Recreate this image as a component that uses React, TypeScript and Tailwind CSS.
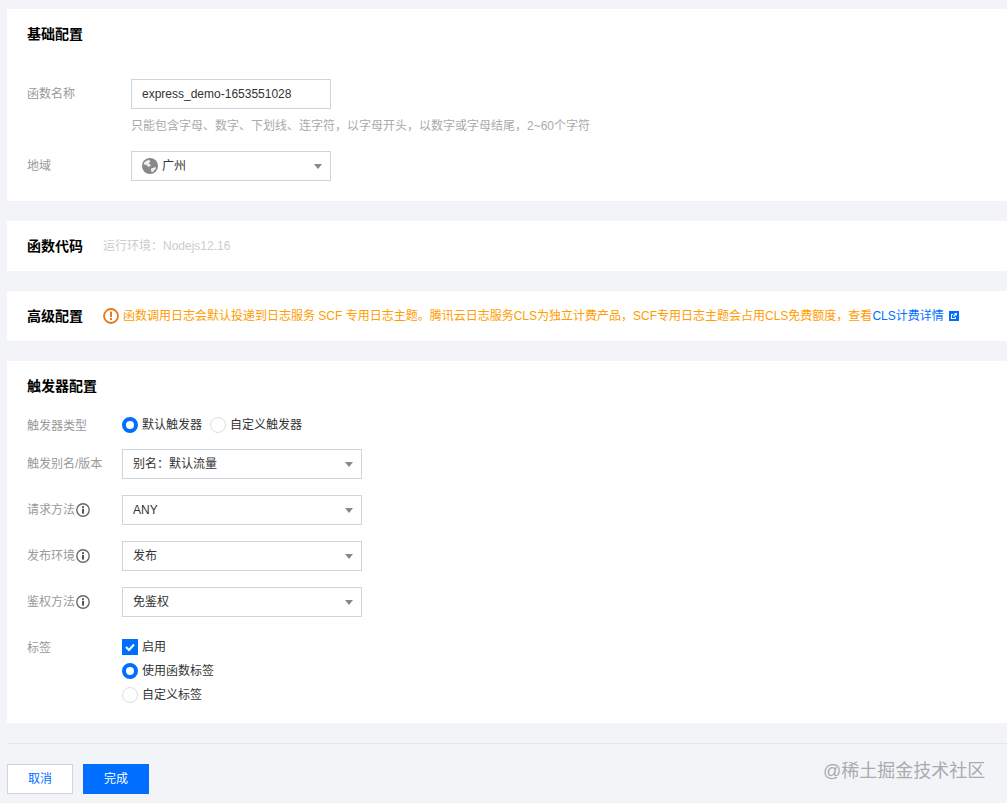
import { ReactNode } from "react";

const font = `[font-family:"Liberation_Sans","Noto_Sans_CJK_SC",sans-serif]`;

function Caret() {
  return <span className="w-0 h-0 border-x-[4px] border-x-transparent border-t-[5px] border-t-[#888]" />;
}

function Select({ children, width }: { children: ReactNode; width: string }) {
  return (
    <div className={`${width} h-[30px] border border-[#cfd5de] bg-white flex items-center justify-between pl-[10px] pr-[8px] text-[12px] text-[#333]`}>
      <div className="flex items-center">{children}</div>
      <Caret />
    </div>
  );
}

function Radio({ checked, label }: { checked?: boolean; label: string }) {
  return (
    <div className="flex items-center gap-[4px]">
      {checked ? (
        <span className="w-4 h-4 rounded-full border-[4px] border-[#006eff] bg-white" />
      ) : (
        <span className="w-4 h-4 rounded-full border border-[#ddd] bg-white" />
      )}
      <span className="text-[12px] leading-4 text-[#333]">{label}</span>
    </div>
  );
}

function InfoIcon() {
  return (
    <svg width="14" height="14" viewBox="0 0 14 14" className="ml-[1px]">
      <circle cx="7" cy="7" r="6.2" fill="none" stroke="#666" strokeWidth="1.4" />
      <rect x="6" y="5.8" width="2" height="4.8" fill="#555" />
      <rect x="6" y="3.2" width="2" height="1.7" fill="#555" />
    </svg>
  );
}

function Row({ label, info, children }: { label: string; info?: boolean; children: ReactNode }) {
  return (
    <div className="flex items-center h-[30px]">
      <div className="w-[95px] flex items-center text-[12px] text-[#999]">
        {label}
        {info && <InfoIcon />}
      </div>
      {children}
    </div>
  );
}

export default function App() {
  return (
    <div className={`${font} w-[1007px] h-[803px] overflow-hidden bg-[#f3f4f7] pt-[9px] pl-[7px]`}>
      {/* 基础配置 */}
      <div className="h-[192px] bg-white pl-5 pt-[16px]">
        <h2 className="text-[14px] leading-[18px] font-bold text-black">基础配置</h2>
        <div className="flex items-center mt-[36px]">
          <div className="w-[104px] text-[12px] text-[#999]">函数名称</div>
          <div className="w-[200px] h-[30px] border border-[#cfd5de] flex items-center pl-[10px] text-[12px] text-[#333]">
            express_demo-1653551028
          </div>
        </div>
        <p className="ml-[104px] mt-[9px] text-[12px] leading-[16px] text-[#aaa]">
          只能包含字母、数字、下划线、连字符，以字母开头，以数字或字母结尾，2~60个字符
        </p>
        <div className="flex items-center mt-[17px]">
          <div className="w-[104px] text-[12px] text-[#999]">地域</div>
          <Select width="w-[200px]">
            <svg width="16" height="16" viewBox="0 0 16 16" className="mr-[4px]">
              <circle cx="8" cy="8" r="8" fill="#888" />
              <path d="M2.5 4 L6.5 1.8 L8.5 3 L7 5.5 L9 7.5 L6.5 9 L4.5 7 L1.6 6.5 Z" fill="#eee" />
              <path d="M9 10.5 L13.5 9 L14 10.5 L10.5 14.2 L9 13.2 Z" fill="#eee" />
            </svg>
            广州
          </Select>
        </div>
      </div>

      {/* 函数代码 */}
      <div className="h-[50px] mt-5 bg-white pl-5 flex items-center">
        <h2 className="text-[14px] font-bold text-black">函数代码</h2>
        <span className="ml-5 text-[12px] text-[#ccc]">运行环境：Nodejs12.16</span>
      </div>

      {/* 高级配置 */}
      <div className="h-[50px] mt-5 bg-white pl-5 flex items-center">
        <h2 className="text-[14px] font-bold text-black">高级配置</h2>
        <svg width="16" height="16" viewBox="0 0 16 16" className="ml-5">
          <circle cx="8" cy="8" r="7" fill="none" stroke="#e8781a" strokeWidth="1.8" />
          <rect x="7" y="3.6" width="2" height="5.4" fill="#e8781a" />
          <rect x="7" y="10" width="2" height="2" fill="#e8781a" />
        </svg>
        <span className="ml-[4px] text-[12px] text-[#ff9d00]">
          函数调用日志会默认投递到日志服务 SCF 专用日志主题。腾讯云日志服务CLS为独立计费产品，SCF专用日志主题会占用CLS免费额度，查看
          <span className="text-[#006eff]">CLS计费详情</span>
        </span>
        <svg width="10" height="10" viewBox="0 0 10 10" className="ml-[5px]">
          <path d="M0 0H10V10H0Z" fill="#006eff" />
          <path d="M2 3H4V4H3V7H6V6H7V8H2Z" fill="#fff" />
          <path d="M5 2H8V5L7 4L5 6L4 5L6 3Z" fill="#fff" />
        </svg>
      </div>

      {/* 触发器配置 */}
      <div className="h-[362px] mt-5 bg-white pl-5 pt-[16px]">
        <h2 className="text-[14px] leading-[18px] font-bold text-black">触发器配置</h2>
        <div className="flex items-center mt-[22px] h-[16px]">
          <div className="w-[95px] text-[12px] text-[#999] pt-[2px]">触发器类型</div>
          <div className="flex gap-2">
            <Radio checked label="默认触发器" />
            <Radio label="自定义触发器" />
          </div>
        </div>
        <div className="flex flex-col gap-4 mt-[16px]">
          <Row label="触发别名/版本">
            <Select width="w-[240px]">别名：默认流量</Select>
          </Row>
          <Row label="请求方法" info>
            <Select width="w-[240px]">ANY</Select>
          </Row>
          <Row label="发布环境" info>
            <Select width="w-[240px]">发布</Select>
          </Row>
          <Row label="鉴权方法" info>
            <Select width="w-[240px]">免鉴权</Select>
          </Row>
        </div>
        <div className="flex mt-[22px]">
          <div className="w-[95px] text-[12px] leading-4 text-[#999] pt-[1px]">标签</div>
          <div className="flex flex-col gap-2">
            <div className="flex items-center gap-[4px]">
              <span className="w-4 h-4 bg-[#006eff] flex items-center justify-center">
                <svg width="12" height="12" viewBox="0 0 12 12">
                  <path d="M2 6 L5 9 L10 3.5" fill="none" stroke="#fff" strokeWidth="2" />
                </svg>
              </span>
              <span className="text-[12px] leading-4 text-[#333]">启用</span>
            </div>
            <Radio checked label="使用函数标签" />
            <Radio label="自定义标签" />
          </div>
        </div>
      </div>

      {/* footer */}
      <div className="mt-5 border-t border-[#e4e6ea] pt-5 flex gap-[10px] relative">
        <button className="w-[66px] h-[30px] border border-[#cfd5de] bg-white text-[12px] text-[#006eff]">取消</button>
        <button className="w-[66px] h-[30px] bg-[#006eff] text-[12px] text-white">完成</button>
        <span className="absolute left-[816px] top-[15px] text-[18px] leading-[24px] text-[#a8abb0]">@稀土掘金技术社区</span>
      </div>
    </div>
  );
}
